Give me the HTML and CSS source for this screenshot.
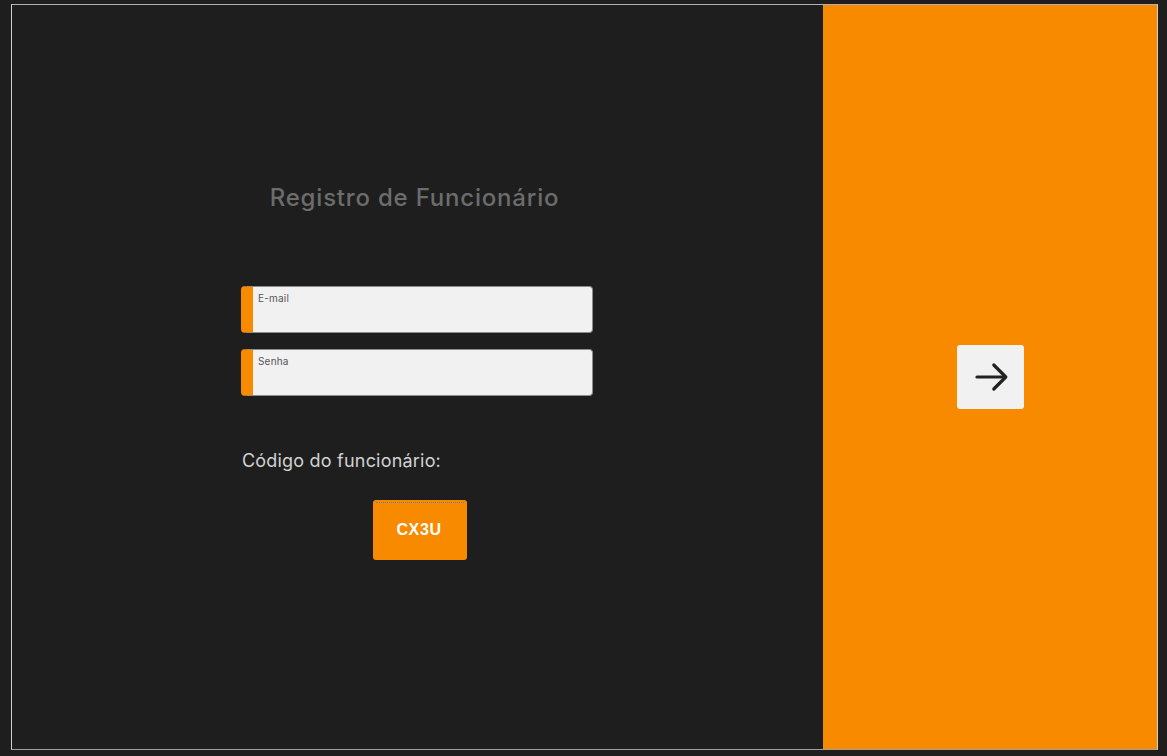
FILE: index.html
```html
<!DOCTYPE html>
<html lang="pt-BR">
<head>
<meta charset="utf-8">
<title>Registro de Funcionário</title>
<link rel="stylesheet" href="styles.css">
</head>
<body>
<div class="frame">
  <section class="left">
    <h1 class="title">Registro de Funcionário</h1>
    <form class="form">
      <label class="field">
        <span class="field-label">E-mail</span>
      </label>
      <label class="field">
        <span class="field-label">Senha</span>
      </label>
      <p class="code-label">Código do funcionário:</p>
      <div class="code-btn">CX3U</div>
    </form>
  </section>
  <aside class="right">
    <button class="next" type="button" aria-label="Próximo">
      <svg width="48" height="48" viewBox="0 0 24 24" fill="none" stroke="#222" stroke-width="1.6" stroke-linecap="round" stroke-linejoin="round"><path d="M5 12h14"/><path d="M13.4 6l6 6-6 6"/></svg>
    </button>
  </aside>
</div>
</body>
</html>
```
FILE: styles.css
```css
* { box-sizing: border-box; }
html, body {
  margin: 0;
  padding: 0;
  background: #1e1e1e;
  font-family: Inter, "Liberation Sans", sans-serif;
}
.frame {
  margin: 4px 0 0 11px;
  width: 1147px;
  height: 746px;
  border: 1px solid #cfcfcf;
  border-top-color: #b0b0b0;
  border-bottom-color: #a0a0a0;
  display: flex;
}
.left {
  flex: 1;
  display: flex;
  flex-direction: column;
  align-items: center;
  padding-top: 178px;
}
.title {
  margin: 0 0 0 -6px;
  font-size: 24px;
  line-height: 30px;
  font-weight: 500;
  letter-spacing: 0.8px;
  color: #6c6c6c;
}
.form {
  width: 352px;
  margin: 73px 0 0 -1px;
  display: flex;
  flex-direction: column;
}
.field {
  display: block;
  height: 47px;
  background: #f1f1f1;
  border: 1px solid #8c8c8c;
  border-left: 12px solid #f88a00;
  border-radius: 4px;
  padding: 5px 0 0 5px;
  margin-bottom: 16px;
}
.field-label {
  display: block;
  font-size: 10px;
  line-height: 12px;
  letter-spacing: 0.2px;
  color: #555;
}
.code-label {
  margin: 37px 0 0 1px;
  font-size: 18px;
  line-height: 24px;
  letter-spacing: 0.2px;
  color: #d2d2d2;
}
.code-btn {
  position: relative;
  margin: 27px 0 0 132px;
  width: 94px;
  height: 60px;
  background: #f88a00;
  border-radius: 3px;
  display: flex;
  align-items: center;
  justify-content: center;
  color: #fff;
  font-family: "Liberation Sans", Arial, sans-serif;
  font-weight: 700;
  font-size: 16px;
  letter-spacing: 0.6px;
  padding-right: 2px;
}
.code-btn::before {
  content: "";
  position: absolute;
  left: 3px;
  right: 3px;
  top: 2px;
  border-top: 1px dotted #5f82a8;
}
.right {
  width: 334px;
  background: #f88a00;
  display: flex;
  align-items: center;
  justify-content: center;
}
.next {
  width: 67px;
  height: 64px;
  border: 0;
  border-radius: 3px;
  background: #f1f1f1;
  display: flex;
  align-items: center;
  justify-content: center;
  padding: 0;
  margin-left: 1px;
}
```
